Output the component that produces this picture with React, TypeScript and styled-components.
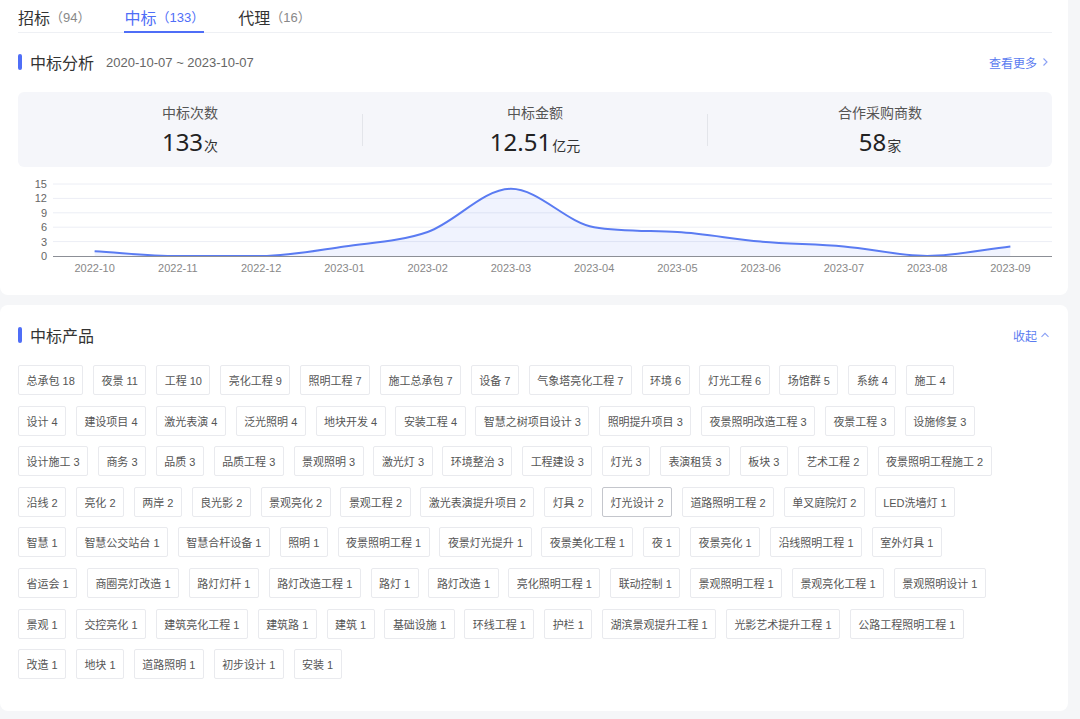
import React from 'react';
import styled, { createGlobalStyle } from 'styled-components';

const GlobalStyle = createGlobalStyle`
  html, body {
    margin: 0;
    padding: 0;
    background: #f5f6f8;
    font-family: "Liberation Sans", "Noto Sans CJK SC", sans-serif;
    color: #333;
  }
`;

const BLUE = '#4f6ef7';

const Page = styled.div`
  display: flex;
  flex-direction: column;
  gap: 10px;
  padding: 0 12px 9px 0;
  width: 1080px;
  box-sizing: border-box;
`;

const Panel = styled.section<{ $top?: boolean }>`
  background: #fff;
  border-radius: ${(p) => (p.$top ? '0 0 8px 8px' : '8px')};
  padding: ${(p) => (p.$top ? '0 16px 15px 18px' : '20px 16px 32px 18px')};
`;

const Tabs = styled.div`
  display: flex;
  height: 33px;
  border-bottom: 1px solid #eef0f4;
  box-sizing: border-box;
`;

const Tab = styled.div<{ $active?: boolean }>`
  display: flex;
  align-items: center;
  margin-right: 34px;
  margin-bottom: -1px;
  font-size: 16px;
  color: ${(p) => (p.$active ? BLUE : '#333')};
  border-bottom: 2px solid ${(p) => (p.$active ? BLUE : 'transparent')};
  padding-top: 2px;
  box-sizing: border-box;
`;

const TabCount = styled.span<{ $active?: boolean }>`
  font-size: 13px;
  color: ${(p) => (p.$active ? BLUE : '#888')};
`;

const SectionHead = styled.div<{ $mt?: number }>`
  display: flex;
  align-items: center;
  height: 20px;
  margin-top: ${(p) => p.$mt ?? 0}px;
`;

const Bar = styled.span`
  width: 4px;
  height: 16px;
  border-radius: 2px;
  background: ${BLUE};
  margin-right: 8px;
`;

const Title = styled.span`
  font-size: 16px;
  color: #333;
`;

const DateRange = styled.span`
  font-size: 13px;
  color: #666;
  margin-left: 12px;
`;

const More = styled.a`
  margin-left: auto;
  margin-right: 2px;
  display: flex;
  align-items: center;
  gap: 3px;
  font-size: 12px;
  color: #5b7bf0;
  cursor: pointer;
`;

const Stats = styled.div`
  display: flex;
  align-items: center;
  margin-top: 20px;
  height: 75px;
  background: #f5f6fa;
  border-radius: 6px;
`;

const StatCell = styled.div`
  flex: 1;
  display: flex;
  flex-direction: column;
  align-items: center;
  padding-top: 2px;
`;

const StatLabel = styled.div`
  font-size: 14px;
  color: #555;
  line-height: 20px;
`;

const StatValue = styled.div`
  margin-top: 5px;
  font-family: "Noto Sans", "Noto Sans CJK SC", sans-serif;
  font-size: 24px;
  line-height: 28px;
  color: #222;
`;

const StatUnit = styled.span`
  font-family: "Noto Sans CJK SC", sans-serif;
  font-size: 14px;
  color: #333;
  margin-left: 1px;
`;

const Divider = styled.div`
  width: 1px;
  height: 32px;
  background: #e3e5ea;
`;

const ChartWrap = styled.div`
  margin-top: 9px;
  height: 104px;
`;

const TagList = styled.div`
  display: flex;
  flex-direction: column;
  gap: 10.6px;
  margin-top: 20px;
`;

const TagRow = styled.div`
  display: flex;
  gap: 9.7px;
`;

const Tag = styled.span<{ $hover?: boolean }>`
  display: inline-flex;
  align-items: center;
  height: 30px;
  padding: 0 7.5px;
  box-sizing: border-box;
  border: 1px solid ${(p) => (p.$hover ? '#c4c6cc' : '#e9eaee')};
  border-radius: 2px;
  font-size: 11px;
  color: #555;
  white-space: nowrap;
`;

const Chevron = ({ dir }: { dir: 'right' | 'up' }) => (
  <svg width="10" height="10" viewBox="0 0 10 10" fill="none" stroke="#8aa0f5" strokeWidth="1.1">
    {dir === 'right' ? <path d="M3.5 1.5 L7 5 L3.5 8.5" /> : <path d="M1.5 6.8 L5 3.3 L8.5 6.8" />}
  </svg>
);

const months = ['2022-10', '2022-11', '2022-12', '2023-01', '2023-02', '2023-03', '2023-04', '2023-05', '2023-06', '2023-07', '2023-08', '2023-09'];
const values = [1, 0, 0, 2, 5, 14, 6, 5, 3, 2, 0, 2];

function monotonePath(pts: [number, number][]) {
  const n = pts.length;
  const m: number[] = [];
  for (let i = 0; i < n - 1; i++) m.push((pts[i + 1][1] - pts[i][1]) / (pts[i + 1][0] - pts[i][0]));
  const t: number[] = [];
  for (let i = 0; i < n; i++) {
    if (i === 0) t.push(m[0]);
    else if (i === n - 1) t.push(m[n - 2]);
    else t.push(m[i - 1] * m[i] <= 0 ? 0 : (m[i - 1] + m[i]) / 2);
  }
  for (let i = 0; i < n - 1; i++) {
    if (m[i] === 0) {
      t[i] = 0;
      t[i + 1] = 0;
      continue;
    }
    const a = t[i] / m[i];
    const b = t[i + 1] / m[i];
    const s = a * a + b * b;
    if (s > 9) {
      const k = 3 / Math.sqrt(s);
      t[i] = k * a * m[i];
      t[i + 1] = k * b * m[i];
    }
  }
  let d = `M${pts[0][0]},${pts[0][1]}`;
  for (let i = 0; i < n - 1; i++) {
    const dx = (pts[i + 1][0] - pts[i][0]) / 3;
    d += ` C${pts[i][0] + dx},${pts[i][1] + t[i] * dx} ${pts[i + 1][0] - dx},${pts[i + 1][1] - t[i + 1] * dx} ${pts[i + 1][0]},${pts[i + 1][1]}`;
  }
  return d;
}

function Chart() {
  const left = 35;
  const right = 1034;
  const y0 = 80;
  const unit = 4.8;
  const step = (right - left) / months.length;
  const pts: [number, number][] = values.map((v, i) => [left + step / 2 + i * step, y0 - v * unit]);
  const line = monotonePath(pts);
  const area = `${line} L${pts[pts.length - 1][0]},${y0} L${pts[0][0]},${y0} Z`;
  return (
    <svg width="1034" height="104" viewBox="0 0 1034 104">
      {[3, 6, 9, 12, 15].map((v) => (
        <line key={v} x1={left} x2={right} y1={y0 - v * unit} y2={y0 - v * unit} stroke="#eceef5" strokeWidth="1" />
      ))}
      {[0, 3, 6, 9, 12, 15].map((v) => (
        <text key={v} x={29} y={y0 - v * unit + 4} textAnchor="end" fontSize="11" fill="#666" fontFamily="Liberation Sans, sans-serif">
          {v}
        </text>
      ))}
      <path d={area} fill="rgba(86,118,240,0.09)" />
      <path d={line} fill="none" stroke="#5a7bf2" strokeWidth="2" />
      <line x1={left} x2={right} y1={y0 + 0.5} y2={y0 + 0.5} stroke="#8c8f96" strokeWidth="1" />
      {months.map((mth, i) => (
        <text key={mth} x={left + step / 2 + i * step} y={96} textAnchor="middle" fontSize="11" fill="#888" fontFamily="Liberation Sans, sans-serif">
          {mth}
        </text>
      ))}
    </svg>
  );
}

const tagRows: string[][] = [
  ['总承包 18', '夜景 11', '工程 10', '亮化工程 9', '照明工程 7', '施工总承包 7', '设备 7', '气象塔亮化工程 7', '环境 6', '灯光工程 6', '场馆群 5', '系统 4', '施工 4'],
  ['设计 4', '建设项目 4', '激光表演 4', '泛光照明 4', '地块开发 4', '安装工程 4', '智慧之树项目设计 3', '照明提升项目 3', '夜景照明改造工程 3', '夜景工程 3', '设施修复 3'],
  ['设计施工 3', '商务 3', '品质 3', '品质工程 3', '景观照明 3', '激光灯 3', '环境整治 3', '工程建设 3', '灯光 3', '表演租赁 3', '板块 3', '艺术工程 2', '夜景照明工程施工 2'],
  ['沿线 2', '亮化 2', '两岸 2', '良光影 2', '景观亮化 2', '景观工程 2', '激光表演提升项目 2', '灯具 2', '灯光设计 2', '道路照明工程 2', '单叉庭院灯 2', 'LED洗墙灯 1'],
  ['智慧 1', '智慧公交站台 1', '智慧合杆设备 1', '照明 1', '夜景照明工程 1', '夜景灯光提升 1', '夜景美化工程 1', '夜 1', '夜景亮化 1', '沿线照明工程 1', '室外灯具 1'],
  ['省运会 1', '商圈亮灯改造 1', '路灯灯杆 1', '路灯改造工程 1', '路灯 1', '路灯改造 1', '亮化照明工程 1', '联动控制 1', '景观照明工程 1', '景观亮化工程 1', '景观照明设计 1'],
  ['景观 1', '交控亮化 1', '建筑亮化工程 1', '建筑路 1', '建筑 1', '基础设施 1', '环线工程 1', '护栏 1', '湖滨景观提升工程 1', '光影艺术提升工程 1', '公路工程照明工程 1'],
  ['改造 1', '地块 1', '道路照明 1', '初步设计 1', '安装 1'],
];

export default function App() {
  return (
    <>
      <GlobalStyle />
      <Page>
        <Panel $top>
          <Tabs>
            <Tab>
              招标<TabCount>（94）</TabCount>
            </Tab>
            <Tab $active>
              中标<TabCount $active>（133）</TabCount>
            </Tab>
            <Tab>
              代理<TabCount>（16）</TabCount>
            </Tab>
          </Tabs>
          <SectionHead $mt={19}>
            <Bar />
            <Title>中标分析</Title>
            <DateRange>2020-10-07 ~ 2023-10-07</DateRange>
            <More>
              查看更多 <Chevron dir="right" />
            </More>
          </SectionHead>
          <Stats>
            <StatCell>
              <StatLabel>中标次数</StatLabel>
              <StatValue>
                133<StatUnit>次</StatUnit>
              </StatValue>
            </StatCell>
            <Divider />
            <StatCell>
              <StatLabel>中标金额</StatLabel>
              <StatValue>
                12.51<StatUnit>亿元</StatUnit>
              </StatValue>
            </StatCell>
            <Divider />
            <StatCell>
              <StatLabel>合作采购商数</StatLabel>
              <StatValue>
                58<StatUnit>家</StatUnit>
              </StatValue>
            </StatCell>
          </Stats>
          <ChartWrap>
            <Chart />
          </ChartWrap>
        </Panel>
        <Panel>
          <SectionHead>
            <Bar />
            <Title>中标产品</Title>
            <More>
              收起 <Chevron dir="up" />
            </More>
          </SectionHead>
          <TagList>
            {tagRows.map((row, ri) => (
              <TagRow key={ri}>
                {row.map((t) => (
                  <Tag key={t} $hover={t === '灯光设计 2'}>
                    {t}
                  </Tag>
                ))}
              </TagRow>
            ))}
          </TagList>
        </Panel>
      </Page>
    </>
  );
}
